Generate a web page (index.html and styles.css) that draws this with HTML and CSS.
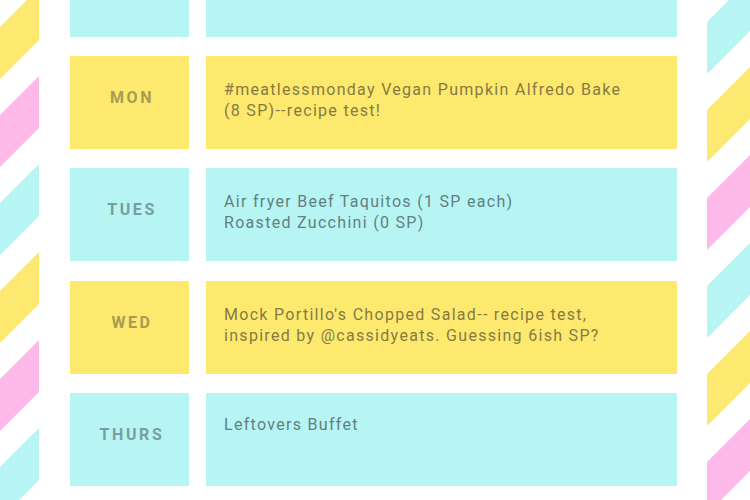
FILE: index.html
```html
<!DOCTYPE html>
<html>
<head>
<meta charset="utf-8">
<link rel="stylesheet" href="styles.css">
</head>
<body>
<div class="page">
  <svg class="strip strip-left" width="39" height="500" viewBox="0 0 39 500">
    <polygon class="s-yellow" points="0,27 39,-12 39,40 0,79"/>
    <polygon class="s-pink" points="0,115 39,76 39,128 0,167"/>
    <polygon class="s-cyan" points="0,203 39,164 39,216 0,255"/>
    <polygon class="s-yellow" points="0,291 39,252 39,304 0,343"/>
    <polygon class="s-pink" points="0,379 39,340 39,392 0,431"/>
    <polygon class="s-cyan" points="0,467 39,428 39,480 0,519"/>
  </svg>
  <main class="plan">
    <div class="cell day cyan"></div>
    <div class="cell meal cyan"></div>

    <div class="cell day yellow">MON</div>
    <div class="cell meal yellow">#meatlessmonday Vegan Pumpkin Alfredo Bake<br>(8 SP)--recipe test!</div>

    <div class="cell day cyan">TUES</div>
    <div class="cell meal cyan">Air fryer Beef Taquitos (1 SP each)<br>Roasted Zucchini (0 SP)</div>

    <div class="cell day yellow">WED</div>
    <div class="cell meal yellow">Mock Portillo's Chopped Salad-- recipe test,<br>inspired by @cassidyeats. Guessing 6ish SP?</div>

    <div class="cell day cyan">THURS</div>
    <div class="cell meal cyan short">Leftovers Buffet</div>
  </main>
  <svg class="strip strip-right" width="43" height="500" viewBox="707 0 43 500">
    <polygon class="s-cyan" points="707,22 750,-21 750,31 707,74"/>
    <polygon class="s-yellow" points="707,110 750,67 750,119 707,162"/>
    <polygon class="s-pink" points="707,198 750,155 750,207 707,250"/>
    <polygon class="s-cyan" points="707,286 750,243 750,295 707,338"/>
    <polygon class="s-yellow" points="707,374 750,331 750,383 707,426"/>
    <polygon class="s-pink" points="707,462 750,419 750,471 707,514"/>
  </svg>
</div>
</body>
</html>
```

FILE: styles.css
```css
html, body {
  margin: 0;
  padding: 0;
  background: #ffffff;
}

.page {
  width: 750px;
  height: 500px;
  display: flex;
  overflow: hidden;
  background: #ffffff;
}

.strip {
  flex: none;
  display: block;
}

.s-yellow { fill: #fee970; }
.s-pink { fill: #fdb9ea; }
.s-cyan { fill: #b7f5f4; }

.plan {
  flex: 1;
  padding-left: 31px;
  display: grid;
  grid-template-columns: 119px 471px;
  grid-template-rows: 36.7px repeat(4, 93px);
  column-gap: 17px;
  row-gap: 19.3px;
  align-content: start;
}

.cell {
  box-sizing: border-box;
  font-family: Roboto, "Liberation Sans", sans-serif;
}

.yellow { background: #fee96f; }
.cyan { background: #b7f5f4; }

.day {
  display: flex;
  align-items: center;
  justify-content: center;
  padding-bottom: 10px;
  padding-left: 5px;
  font-size: 16px;
  font-weight: 700;
  letter-spacing: 2.6px;
}

.day.yellow { color: #a69c52; }
.day.cyan { color: #7a9e9e; }

.meal {
  padding: 23px 10px 0 18px;
  font-size: 16px;
  line-height: 21px;
  letter-spacing: 1.3px;
  font-weight: 400;
}

.meal.short { padding-top: 21px; }

.meal.yellow { color: #857b42; }
.meal.cyan { color: #62807f; }
```
